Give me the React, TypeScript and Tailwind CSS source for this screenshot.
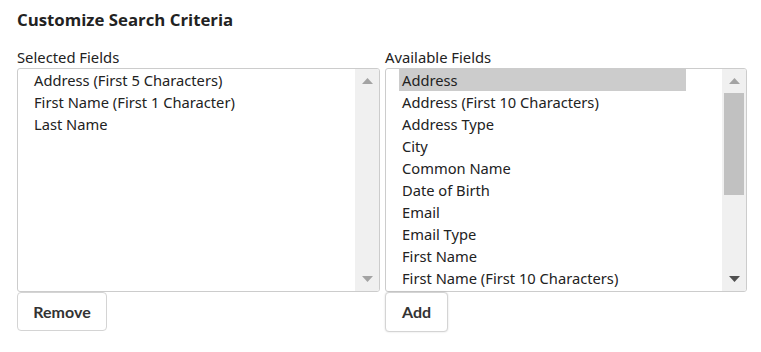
import { useState } from "react";

const selectedFields = ["Address (First 5 Characters)", "First Name (First 1 Character)", "Last Name"];

const availableFields = [
  "Address",
  "Address (First 10 Characters)",
  "Address Type",
  "City",
  "Common Name",
  "Date of Birth",
  "Email",
  "Email Type",
  "First Name",
  "First Name (First 10 Characters)",
];

const bodyFont = "font-['Segoe_UI','Noto_Sans',sans-serif]";

function FakeScrollbar({ thumb }: { thumb: boolean }) {
  return (
    <div className="flex w-[24px] shrink-0 flex-col items-center bg-[#f0f0f0]">
      <div className="flex h-[24px] w-full items-center justify-center">
        <svg width="11" height="6" viewBox="0 0 11 6">
          <path d="M0 6 L5.5 0 L11 6 Z" fill="#a3a3a3" />
        </svg>
      </div>
      <div className="flex-1 w-full px-[2px]">
        {thumb && <div className="h-[102px] w-full bg-[#c1c1c1]" />}
      </div>
      <div className="flex h-[24px] w-full items-center justify-center">
        <svg width="11" height="6" viewBox="0 0 11 6">
          <path d="M0 0 L11 0 L5.5 6 Z" fill={thumb ? "#505050" : "#a3a3a3"} />
        </svg>
      </div>
    </div>
  );
}

function FieldList({ label, items, highlighted, thumb }: { label: string; items: string[]; highlighted?: number; thumb: boolean }) {
  return (
    <div className="flex flex-col">
      <label className={`${bodyFont} text-[14.8px] leading-[20px] text-[#222] mb-[1px]`}>{label}</label>
      <div className="flex h-[224px] overflow-hidden rounded-[3px] border border-[#cccccc] bg-white">
        <ul className={`${bodyFont} flex-1 min-w-0 pl-[13px] pr-[36px] text-[14.7px] text-[#222]`}>
          {items.map((item, i) => (
            <li key={item} className={`h-[22px] leading-[22px] pl-[3px] whitespace-nowrap ${i === highlighted ? "bg-[#cccccc]" : ""}`}>
              {item}
            </li>
          ))}
        </ul>
        <FakeScrollbar thumb={thumb} />
      </div>
    </div>
  );
}

export default function App() {
  const [sel] = useState(0);
  return (
    <div className="min-h-screen bg-white px-[17px] pt-[8px]">
      <h2 className="font-['Open_Sans',sans-serif] text-[16.8px] font-bold leading-[24px] text-[#222]">Customize Search Criteria</h2>
      <div className="mt-[15px] grid grid-cols-[363px_362px] gap-x-[5px]">
        <FieldList label="Selected Fields" items={selectedFields} thumb={false} />
        <FieldList label="Available Fields" items={availableFields} highlighted={sel} thumb />
        <div>
          <button className="h-[39px] w-[90px] rounded-[4px] border border-[#d4d4d4] bg-white font-['Lato',sans-serif] text-[16px] font-bold text-[#333]">
            Remove
          </button>
        </div>
        <div>
          <button className="h-[40px] w-[63px] rounded-[4px] border border-[#d4d4d4] bg-white font-['Lato',sans-serif] text-[16px] font-bold text-[#333] shadow-[0_0_2px_rgba(0,0,0,0.15)]">
            Add
          </button>
        </div>
      </div>
    </div>
  );
}
